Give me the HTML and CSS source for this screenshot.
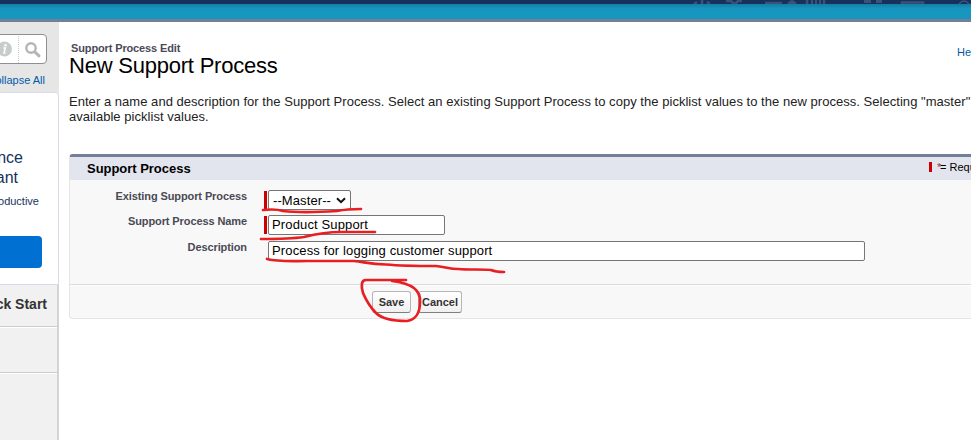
FILE: index.html
```html
<!DOCTYPE html>
<html lang="en">
<head>
<meta charset="utf-8">
<title>New Support Process</title>
<link rel="stylesheet" href="styles.css">
</head>
<body>
<header class="topbar">
  <svg class="topbar-pattern" width="300" height="4" viewBox="0 0 300 4" fill="none" stroke="#3a5278" stroke-width="2.500">
    <path d="M23 4l3-2M31 0v4M36 2l3 2M55 1h5l3 3M71 1h-4l-3 3M94 3h17M117 4l4-3 4 3M121 0v4M136 0v4M153 0v4"/>
    <path d="M141 0v4M145 0v4M149 0v4" stroke-width="2"/>
    <path d="M193 1.500h7M205 1.500h6" stroke-width="3"/>
    <path d="M231 4V2.500h21V4" stroke-width="2.500"/>
    <path d="M288 4q5-6 10 0" stroke-width="1.500"/>
  </svg>
</header>
<div class="tabbar"></div>
<div class="page">
  <aside class="sidebar">
    <div class="search">
      <div class="search-box">
        <svg class="search-icons" width="60" height="28" viewBox="0 0 60 28">
          <circle cx="18.500" cy="14" r="7.500" fill="#c9cccd"/>
          <circle cx="19.500" cy="10.300" r="1.200" fill="#fff"/>
          <path d="M17.300 13h2l-1.200 5h1.300" fill="none" stroke="#fff" stroke-width="1.600"/>
          <path d="M32.500 1v27" stroke="#ccc" stroke-dasharray="1 1"/>
          <circle cx="45" cy="13" r="4.700" fill="none" stroke="#b2b6b8" stroke-width="2.400"/>
          <path d="M48.800 16.800l4.200 4" stroke="#b2b6b8" stroke-width="3" stroke-linecap="round"/>
        </svg>
      </div>
      <a class="collapse">Collapse All</a>
    </div>
    <div class="promo">
      <div class="promo-title">Experience</div>
      <div class="promo-title second">Assistant</div>
      <div class="promo-text">productive</div>
      <div class="promo-button"></div>
    </div>
    <div class="nav-item quick">Quick Start</div>
    <div class="nav-item"></div>
    <div class="nav-item last"></div>
  </aside>
  <main class="content">
    <div class="title-row">
      <div>
        <div class="crumb">Support Process Edit</div>
        <h1>New Support Process</h1>
      </div>
      <a class="help">Help</a>
    </div>
    <p class="intro"><span class="line">Enter a name and description for the Support Process. Select an existing Support Process to copy the picklist values to the new process. Selecting "master"</span><span class="line">available picklist values.</span></p>
    <section class="panel">
      <div class="panel-head"><h2>Support Process</h2><div class="legend"><i class="legend-bar"></i><span class="star">*</span><span>= Required</span></div></div>
      <div class="form">
        <label>Existing Support Process</label>
        <div class="field required f1"><div class="select"><span>--Master--</span><svg width="10" height="7" viewBox="0 0 10 7"><path d="M1 1.200l4 4 4-4" fill="none" stroke="#111" stroke-width="2"/></svg></div></div>
        <label>Support Process Name</label>
        <div class="field required f2"><div class="input short"><span>Product Support</span></div></div>
        <label>Description</label>
        <div class="field f3"><div class="input long"><span>Process for logging customer support</span></div></div>
      </div>
      <div class="buttons"><div class="btn save">Save</div><div class="btn cancel">Cancel</div></div>
    </section>
  </main>
</div>
<svg class="marks" width="971" height="440" viewBox="0 0 971 440">
  <path d="M263 210C272 209 277 209 283 211C300 213 321 212 337 211C347 209 352 209 361 209"/>
  <path d="M261 239C275 239 290 239 304 237C320 233 329 232 341 232H375"/>
  <path d="M267 259C279 262 292 261 307 261H354C369 263 372 264 386 264.500C403 266 419 266 436 266C447 267 449 269 458 269C470 270 482 269 491 270C496 272 498 272 504 272"/>
  <path d="M406 280H366C361 280 361 286 363 293C366 300 370 307 376 313C383 320 395 321 407 321C416 320 420 312 420 302C421 289 410 283 392 281"/>
</svg>
</body>
</html>
```
FILE: styles.css
```css
* { box-sizing: border-box; }
body { margin: 0; width: 971px; height: 440px; overflow: hidden; background: #fff; font-family: "Liberation Sans", Arial, sans-serif; color: #222; }
.topbar { height: 4px; background: #16325c; display: flex; justify-content: flex-end; }
.topbar-pattern { display: block; }
.tabbar { height: 18px; background: linear-gradient(#137fa5, #1797c0 5px); border-bottom: 3px solid #747e96; }
.page { display: flex; height: 418px; }
.sidebar { width: 59px; flex: none; overflow: hidden; background: #f1f1f1; }
.search { height: 70px; background: #e6e6e6; padding-top: 12px; display: flex; flex-direction: column; align-items: flex-end; }
.search-box { width: 62px; height: 30px; margin-right: 12px; border: 1px solid #8f8f8f; border-radius: 4px; background: #fff; display: flex; flex: none; justify-content: flex-end; }
.search-icons { display: block; flex: none; }
.collapse { color: #015ba7; font-size: 11px; line-height: 14px; margin: 9px 14px 0 0; white-space: nowrap; }
.promo { height: 193px; background: #fff; border: 1px solid #d9d9e7; border-left: 0; border-radius: 0 4px 0 0; padding-top: 55px; display: flex; flex-direction: column; align-items: flex-end; }
.promo-title { color: #16325c; font-size: 16px; line-height: 20px; margin-right: 35px; white-space: nowrap; }
.second { margin-right: 40px; }
.promo-text { color: #16325c; font-size: 11px; line-height: 14px; margin: 6px 19px 0 0; }
.promo-button { width: 80px; height: 32px; flex: none; background: #0070d2; border-radius: 4px; margin: 28px 16px 0 0; }
.nav-item { height: 46px; border-bottom: 1px solid #ccc; border-right: 2px solid #d4d4d4; box-shadow: inset 0 1px #fff; }
.quick { height: 42px; display: flex; justify-content: flex-end; font-size: 14px; font-weight: bold; line-height: 38px; color: #333; padding-right: 10px; white-space: nowrap; box-shadow: none; }
.last { height: 70px; }
.content { width: 912px; flex: none; padding: 18px 0 0 10px; overflow: hidden; }
.title-row { display: flex; justify-content: space-between; height: 53px; }
.crumb { margin: 1px 0 0 2px; font-size: 11px; font-weight: bold; line-height: 14px; letter-spacing: -0.13px; color: #4a4a56; }
h1 { margin: 0; font-size: 22px; font-weight: normal; line-height: 22px; letter-spacing: -0.22px; color: #000; white-space: nowrap; }
.help { width: 14px; overflow: hidden; font-size: 11px; line-height: 14px; padding-top: 5px; color: #015ba7; }
.intro { margin: 0 0 30px; padding-top: 1px; font-size: 13px; line-height: 15px; letter-spacing: 0.035px; white-space: nowrap; }
.line { display: block; }
.panel { height: 165px; border: 1px solid #e5e5e5; border-top: 3px solid #747e96; border-right: 0; border-radius: 4px 0 0 4px; background: #f8f8f8; }
.panel-head { height: 23px; background: #e3e5ee; padding-left: 17px; display: flex; justify-content: space-between; }
h2 { margin: 0; font-size: 13px; line-height: 24px; letter-spacing: -0.03px; color: #000; }
.legend { width: 42px; display: flex; font-size: 11px; line-height: 21px; color: #000; white-space: nowrap; overflow: hidden; }
.legend-bar { width: 3px; height: 10px; background: #c00; margin: 5px 5px 0 0; flex: none; }
.star { color: #a33; width: 3px; flex: none; }
.form { height: 105px; padding-top: 9px; border-bottom: 1px solid #dbdbdb; display: grid; grid-template-columns: 177px 1fr; grid-template-rows: 25px 26px 26px; column-gap: 17px; align-content: start; }
label { text-align: right; font-size: 11px; font-weight: bold; line-height: 14px; letter-spacing: -0.1px; color: #4a4a56; white-space: nowrap; }
.field { padding-left: 4px; }
.required { border-left: 3px solid #c00; padding-left: 1px; height: 18px; }
.f1 { margin-top: 2px; }
.f2 { margin-top: 2px; }
.f3 { margin-top: 1px; }
.select { width: 83px; height: 20px; margin-top: -1px; border: 1px solid #767676; border-radius: 2px; background: #fff; display: flex; justify-content: space-between; align-items: center; padding: 0 4px; font-size: 13px; letter-spacing: 0.1px; color: #000; }
.input { height: 20px; border: 1px solid #767676; border-radius: 2px; background: #fff; padding-left: 3px; font-size: 13px; line-height: 18px; letter-spacing: 0.14px; color: #000; }
.short { width: 177px; margin-top: -1px; }
.long { width: 597px; }
.buttons { display: flex; gap: 7px; padding: 6px 0 0 302px; box-shadow: inset 0 1px #fff; }
.btn { height: 22px; border: 1px solid #b5b5b5; border-bottom-color: #7f7f7f; border-radius: 3px; background: linear-gradient(#fff, #f0f0f0); font-size: 11px; font-weight: bold; line-height: 20px; text-align: center; color: #333; }
.save { width: 39px; }
.cancel { width: 44px; }
.marks { position: absolute; left: 0; top: 0; fill: none; stroke: #e71e22; stroke-width: 2.700; stroke-linecap: round; stroke-linejoin: round; pointer-events: none; }
```
